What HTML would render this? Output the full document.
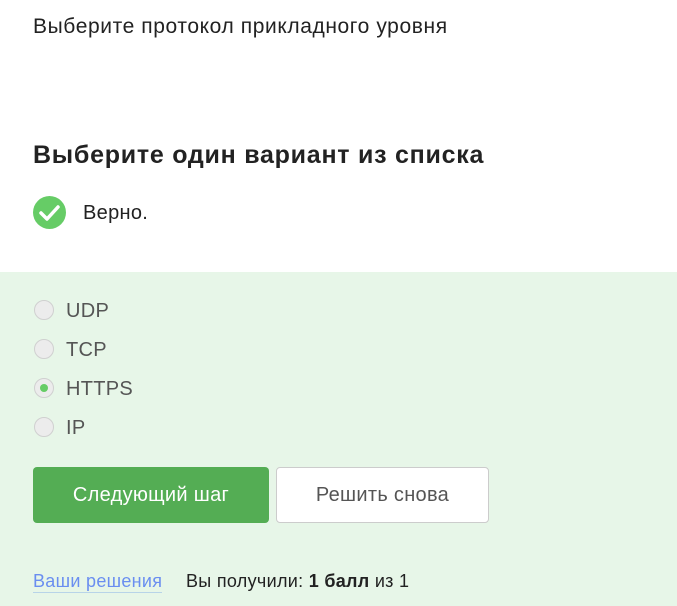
<!DOCTYPE html><html><head><meta charset="utf-8"><style>
body{margin:0;width:677px;height:606px;overflow:hidden;background:#fff;font-family:"Liberation Sans",sans-serif;position:relative;color:#222}
.a{position:absolute;white-space:nowrap}
.g{position:absolute;left:0;top:272px;width:677px;height:334px;background:#e7f6e8}
.r{position:absolute;left:34px;width:20px;height:20px;border-radius:50%;background:#ececec;border:1px solid #d0d0d0;box-sizing:border-box}
.o{font-size:20px;color:#555;left:66px;letter-spacing:0.3px}
.b{position:absolute;top:467px;height:56px;border-radius:4px;font-size:20px;letter-spacing:0.3px;display:flex;align-items:center;justify-content:center;box-sizing:border-box}
</style></head><body>
<div class="a" style="left:33px;top:15px;font-size:21px;letter-spacing:0.6px">Выберите протокол прикладного уровня</div>
<div class="a" style="left:33px;top:141px;font-size:25px;font-weight:bold;color:#222;letter-spacing:0.75px">Выберите один вариант из списка</div>
<svg class="a" style="left:33px;top:196px" width="33" height="33" viewBox="0 0 33 33"><circle cx="16.5" cy="16.5" r="16.5" fill="#66cc66"/><path d="M8 17l6 6 11-12" stroke="#fff" stroke-width="3.5" fill="none" stroke-linecap="round" stroke-linejoin="round"/></svg>
<div class="a" style="left:83px;top:202px;font-size:20px;letter-spacing:0.3px">Верно.</div>
<div class="g"></div>
<div class="r" style="top:300px"></div><div class="a o" style="top:300px">UDP</div>
<div class="r" style="top:339px"></div><div class="a o" style="top:339px">TCP</div>
<div class="r" style="top:378px"><div style="position:absolute;left:5px;top:5px;width:8px;height:8px;border-radius:50%;background:#66cc66"></div></div><div class="a o" style="top:378px">HTTPS</div>
<div class="r" style="top:417px"></div><div class="a o" style="top:417px">IP</div>
<div class="b" style="left:33px;width:236px;background:#54ad54;color:#fff">Следующий шаг</div>
<div class="b" style="left:276px;width:213px;background:#fff;border:1px solid #ccc;color:#555">Решить снова</div>
<div class="a" style="left:33px;top:570px;font-size:18px;color:#6a8ef0;border-bottom:1px solid #b8d4e8;line-height:22px;letter-spacing:0.3px">Ваши решения</div>
<div class="a" style="left:186px;top:570px;font-size:18px;line-height:22px;color:#222;letter-spacing:0.3px">Вы получили: <b>1 балл</b> из 1</div>
</body></html>
